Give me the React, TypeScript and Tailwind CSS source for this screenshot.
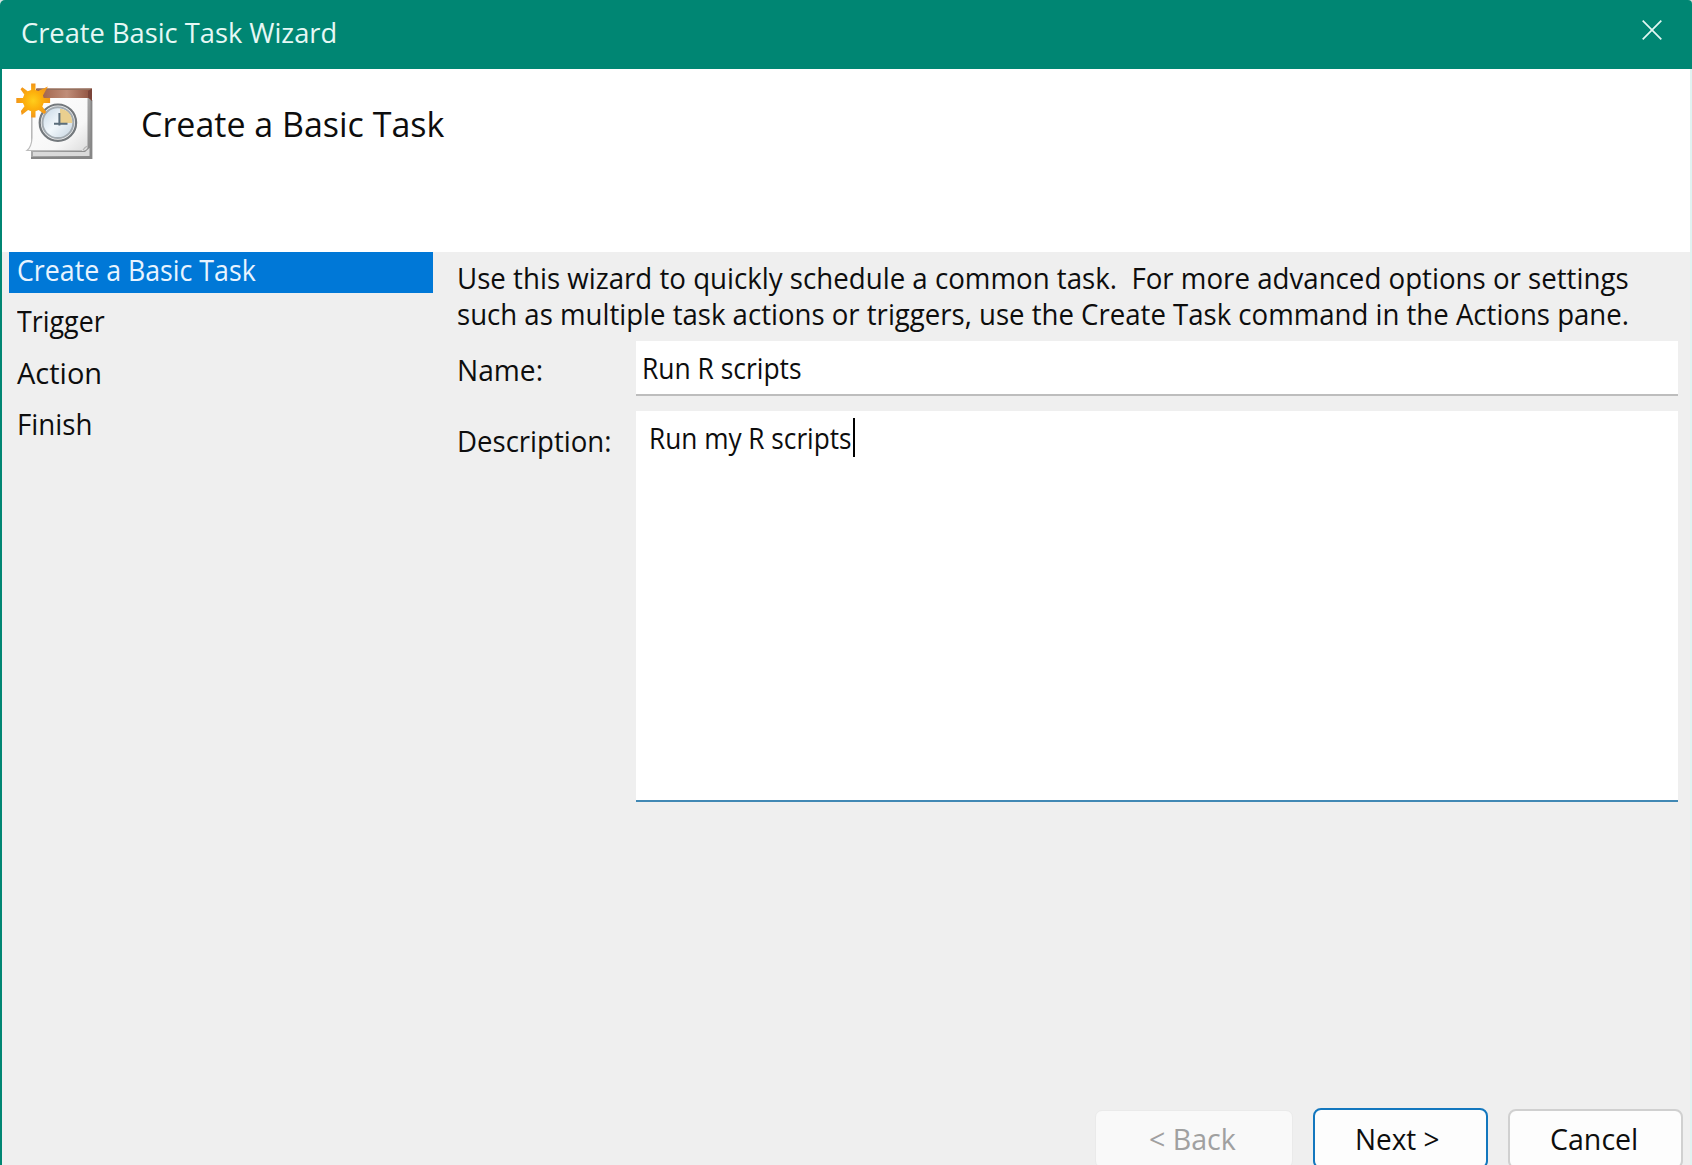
import type { ReactNode } from "react";
import clsx from "clsx";

function Label({ children, fit, className }: { children: ReactNode; fit: string; className?: string }) {
  return (
    <span className={clsx("inline-block origin-left whitespace-pre", fit, className)}>{children}</span>
  );
}

function TaskIcon() {
  return (
    <svg className="h-[78px] w-[78px]" viewBox="16 83 78 78" aria-hidden="true">
      <defs>
        <linearGradient id="page" x1="0" y1="0" x2="1" y2="1">
          <stop offset="0" stopColor="#ffffff" />
          <stop offset="0.7" stopColor="#f7f7f7" />
          <stop offset="1" stopColor="#dcdcdc" />
        </linearGradient>
        <linearGradient id="edge" x1="0" y1="0" x2="1" y2="1">
          <stop offset="0" stopColor="#c8c8c8" />
          <stop offset="1" stopColor="#858585" />
        </linearGradient>
        <linearGradient id="band" x1="0" y1="0" x2="1" y2="0">
          <stop offset="0" stopColor="#9c5c43" />
          <stop offset="0.55" stopColor="#c08d78" />
          <stop offset="1" stopColor="#8d4f3d" />
        </linearGradient>
        <linearGradient id="face" x1="0" y1="0" x2="1" y2="1">
          <stop offset="0" stopColor="#c5d6e4" />
          <stop offset="0.5" stopColor="#f2f8fc" />
          <stop offset="1" stopColor="#c3d2de" />
        </linearGradient>
        <radialGradient id="sun">
          <stop offset="0" stopColor="#ffce1c" />
          <stop offset="0.5" stopColor="#fdb00c" />
          <stop offset="1" stopColor="#f2961a" />
        </radialGradient>
      </defs>
      <path d="M31 93H92V159H31Z" fill="url(#edge)" />
      <path d="M33 152H85L89.5 148V156H33Z" fill="#dadada" />
      <path d="M31 158H91.5V100" fill="none" stroke="#868686" strokeWidth="1.8" />
      <path d="M32 97H87.5V148Q86 151 82 151H27Q31.5 147 32 138Z" fill="url(#page)" />
      <path d="M32 100V138Q31.5 147 27 150.5H82" fill="none" stroke="#bcbcbc" strokeWidth="1.2" />
      <path d="M83 150Q85 147 87.5 146" fill="none" stroke="#b4b4b4" strokeWidth="1.3" />
      <path d="M36 88.5H92V98H36Z" fill="url(#band)" />
      <path d="M37 89.2H91.5" stroke="#93705f" strokeWidth="1.4" />
      <path d="M88 91L92 88.5V101L88 97.5Z" fill="#7b4439" />
      <circle cx="57.9" cy="122.7" r="18.2" fill="#f3f3f3" stroke="#73787c" strokeWidth="2.2" />
      <circle cx="57.9" cy="122.7" r="15.4" fill="url(#face)" stroke="#a3abb1" strokeWidth="2" />
      <path d="M60 108.8V123H72.3Q72 110.5 60 108.8Z" fill="#eacf8f" />
      <path d="M59.4 113V125.5M54 123.8H67.5" fill="none" stroke="#5a6d7b" strokeWidth="2" />
      <g transform="translate(33.3 100.6)" fill="url(#sun)">
        <path d="M-2.2 -17H2.2V-10.5L5 -9.5L14.6 -14L9.6 -5L10.4 -2.5H16.8V2.5H10.4L9 6L13 11.5L10.8 13.4L5.4 9.4L2.2 10.6V17H-2.2V10.6L-5.2 9.4L-11.6 14.4L-12.4 10.4L-8.8 5.6L-10.4 2.5H-17V-2.5H-10.4L-9 -6L-12.8 -11.4L-11 -13.4L-5.6 -9.4L-2.2 -10.6Z" />
      </g>
    </svg>
  );
}

const steps = [
  { name: "Create a Basic Task", fit: "scale-x-[0.922]", active: true },
  { name: "Trigger", fit: "scale-x-[0.925]", active: false },
  { name: "Action", fit: "scale-x-[1]", active: false },
  { name: "Finish", fit: "scale-x-[0.955]", active: false },
];

export default function App() {
  return (
    <div className="h-[1165px] w-[1692px] overflow-hidden bg-[#d5e4e1] font-['Open_Sans','Noto_Sans',sans-serif] text-[29px] text-[#0d0d0d]">
      <div className="flex h-[1180px] flex-col overflow-hidden rounded-tl-[5px] rounded-tr-[4px] bg-[#008673]">
        <header className="flex h-[69px] items-start justify-between pl-[21px] pr-[30px]">
          <h1 className="text-[28px] leading-[64px] text-[#e6f8f5]">
            <Label fit="scale-x-[0.974]">Create Basic Task Wizard</Label>
          </h1>
          <svg className="mt-5 h-5 w-5" viewBox="0 0 20 20" aria-label="Close">
            <path d="M0.7 0.7L19.3 19.3M19.3 0.7L0.7 19.3" stroke="#e2f7f3" strokeWidth="1.7" />
          </svg>
        </header>

        <div className="ml-0.5 flex flex-1 flex-col border-r-2 border-[#e0f3f1] bg-[#efefef]">
          <section className="flex h-[183px] bg-white pl-3.5 pt-3.5">
            <TaskIcon />
            <h2 className="ml-[47px] mt-[15px] text-[35px] leading-[52px]">
              <Label fit="scale-x-[0.971]">Create a Basic Task</Label>
            </h2>
          </section>

          <div className="flex h-[856px] pr-3">
            <nav className="ml-[7px] flex w-[424px] shrink-0 flex-col gap-[10.3px]">
              {steps.map((s) => (
                <div
                  key={s.name}
                  className={clsx("h-[41px] pl-2 leading-[36px]", s.active && "bg-[#0078d7] text-[#e8f4ff]")}
                >
                  <Label fit={s.fit}>{s.name}</Label>
                </div>
              ))}
            </nav>

            <main className="ml-6 min-w-0 flex-1">
              <div className="h-[89px] pt-[7.5px] leading-[36.5px]">
                <div className="h-[36.5px]"><Label fit="scale-x-[0.954]">{"Use this wizard to quickly schedule a common task.  For more advanced options or settings"}</Label></div>
                <div className="h-[36.5px]"><Label fit="scale-x-[0.951]">such as multiple task actions or triggers, use the Create Task command in the Actions pane.</Label></div>
              </div>

              <div className="flex h-[55px]">
                <div className="w-[179px] leading-[58px]">
                  <Label fit="scale-x-[0.97]">Name:</Label>
                </div>
                <div className="h-[55px] flex-1 border-b-2 border-[#bdbdbd] bg-white pl-[6px] leading-[54px]">
                  <Label fit="scale-x-[0.911]">Run R scripts</Label>
                </div>
              </div>

              <div className="mt-[15px] flex">
                <div className="w-[179px] leading-[60px]">
                  <Label fit="scale-x-[0.951]">Description:</Label>
                </div>
                <div className="flex h-[391px] flex-1 border-b-2 border-[#4188b4] bg-white pl-[13px] leading-[54px]">
                  <div className="w-[204px]">
                    <Label fit="scale-x-[0.904]">Run my R scripts</Label>
                  </div>
                  <div className="mt-[7px] h-[39px] w-0.5 bg-black" />
                </div>
              </div>
            </main>
          </div>

          <footer className="flex items-start pl-[1093px]">
            <button className="mt-0.5 h-[58px] w-[198px] rounded-[7px] border border-[#eaeaea] bg-[#f9f9f9] pl-[53px] text-left leading-[56px] text-[#a0a0a0]">
              <Label fit="scale-x-[0.985]">{"< Back"}</Label>
            </button>
            <button className="ml-[20px] h-[61px] w-[175px] rounded-[8px] border-2 border-[#1377be] bg-[#fdfdfd] pl-[40px] text-left leading-[57px]">
              <Label fit="scale-x-[0.963]">{"Next >"}</Label>
            </button>
            <button className="ml-[20px] mt-px h-[60px] w-[175px] rounded-[8px] border-2 border-[#d0d0d0] bg-[#fdfdfd] pl-[40px] text-left leading-[56px]">
              <Label fit="scale-x-[0.985]">Cancel</Label>
            </button>
          </footer>
        </div>
      </div>
    </div>
  );
}
